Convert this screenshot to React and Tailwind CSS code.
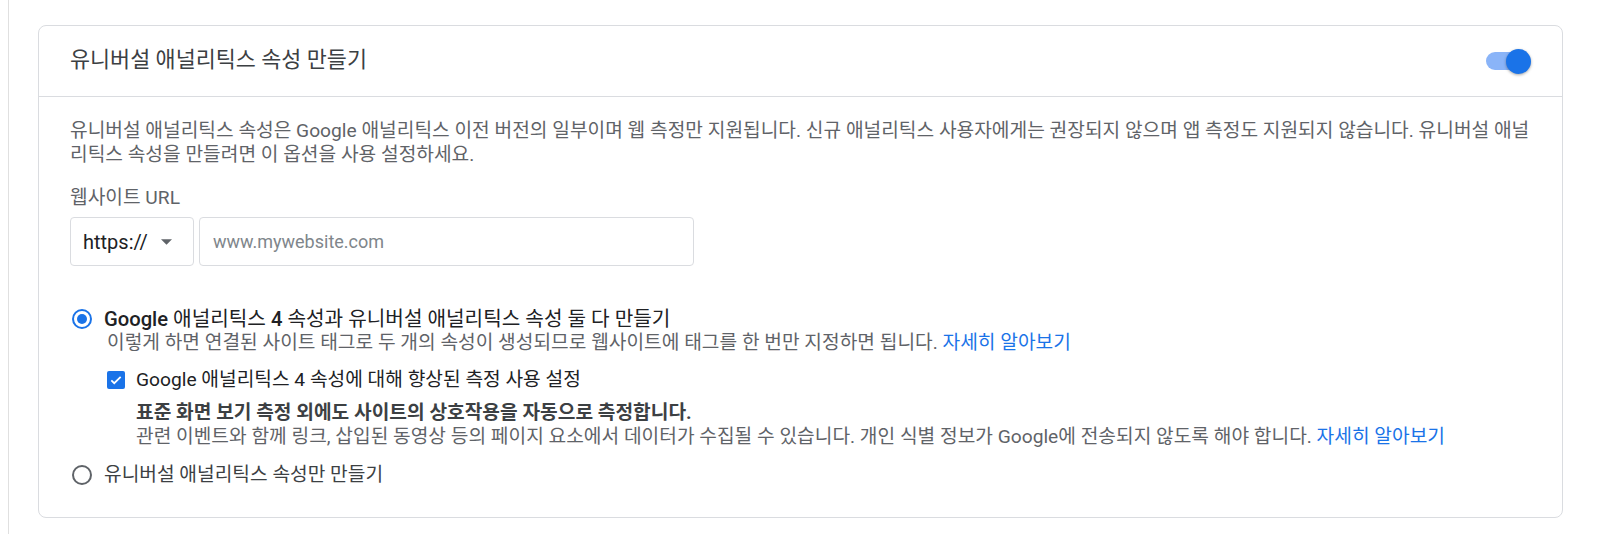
import { useState } from 'react';

const font = { fontFamily: 'Roboto, "Noto Sans CJK KR", sans-serif' };

function Toggle({ on, onChange }) {
  return (
    <button
      type="button"
      onClick={() => onChange(!on)}
      className="relative w-[45px] h-[25px] shrink-0"
    >
      <span className={`absolute left-0 top-[3.5px] w-[40px] h-[18px] rounded-full ${on ? 'bg-[#8ab4f8]' : 'bg-[#bdc1c6]'}`}></span>
      <span
        className={`absolute top-0 w-[25px] h-[25px] rounded-full shadow-[0_1px_3px_rgba(0,0,0,0.35)] ${on ? 'right-0 bg-[#1a73e8]' : 'left-0 bg-white'}`}
      ></span>
    </button>
  );
}

function Radio({ checked }) {
  return (
    <span
      className={`ml-[2px] w-[20px] h-[20px] rounded-full border-2 flex items-center justify-center shrink-0 ${checked ? 'border-[#1a73e8]' : 'border-[#5f6368]'}`}
    >
      {checked && <span className="w-[10px] h-[10px] rounded-full bg-[#1a73e8]"></span>}
    </span>
  );
}

export default function App() {
  const [enabled, setEnabled] = useState(true);
  const [both, setBoth] = useState(true);
  const [enhanced, setEnhanced] = useState(true);

  return (
    <div className="w-full min-h-[534px] bg-white pl-[8px]" style={font}>
      <div className="min-h-[534px] border-l border-[#e0e0e0] pt-[25px] pl-[29px]">
        <div className="w-[1525px] border border-[#dadce0] rounded-lg bg-white">
          <div className="h-[71px] px-[31px] flex items-center justify-between border-b border-[#dadce0]">
            <h2 className="text-[21.8px] leading-[28px] text-[#3c4043] -mt-[3px]">유니버설 애널리틱스 속성 만들기</h2>
            <Toggle on={enabled} onChange={setEnabled} />
          </div>

          <div className="px-[31px] pt-[22px] pb-[30px] text-[19.2px] leading-[24px]">
            <p className="text-[#5f6368]">
              <span className="block whitespace-nowrap">
                유니버설 애널리틱스 속성은 Google 애널리틱스 이전 버전의 일부이며 웹 측정만 지원됩니다. 신규 애널리틱스 사용자에게는 권장되지 않으며 앱 측정도 지원되지 않습니다. 유니버설 애널
              </span>
              <span className="block whitespace-nowrap">리틱스 속성을 만들려면 이 옵션을 사용 설정하세요.</span>
            </p>

            <div className="mt-[19px] text-[#5f6368]">웹사이트 URL</div>
            <div className="mt-[7px] flex gap-[5px]">
              <div className="w-[124px] h-[49px] border border-[#dadce0] rounded-[4px] flex items-center justify-between pl-[12px] pr-[21px] text-[#202124] text-[20px]">
                <span>https://</span>
                <svg width="11" height="6" viewBox="0 0 10 5" className="shrink-0">
                  <path d="M0 0h10L5 5z" fill="#5f6368" />
                </svg>
              </div>
              <input
                className="w-[495px] h-[49px] border border-[#dadce0] rounded-[4px] pl-[13px] outline-none text-[18px] placeholder:text-[#80868b] text-[#202124]"
                placeholder="www.mywebsite.com"
              />
            </div>

            <div className="mt-[41px]">
              <label className="flex items-center gap-[12px] cursor-pointer" onClick={() => setBoth(true)}>
                <Radio checked={both} />
                <span className="text-[#202124] text-[20.2px]">
                  <span className="font-medium">Google</span> 애널리틱스 <span className="font-medium">4</span> 속성과 유니버설 애널리틱스 속성 둘 다 만들기
                </span>
              </label>
              <div className="pl-[37px]">
                <p className="text-[#5f6368]">
                  이렇게 하면 연결된 사이트 태그로 두 개의 속성이 생성되므로 웹사이트에 태그를 한 번만 지정하면 됩니다.{' '}
                  <a className="text-[#1a73e8]">자세히 알아보기</a>
                </p>
                <label className="mt-[13px] flex items-center gap-[11px] cursor-pointer" onClick={() => setEnhanced(!enhanced)}>
                  <span className={`w-[18px] h-[18px] rounded-[2px] flex items-center justify-center shrink-0 ${enhanced ? 'bg-[#1a73e8]' : 'border-2 border-[#5f6368]'}`}>
                    {enhanced && (
                      <svg width="14" height="14" viewBox="0 0 24 24">
                        <path d="M4 12.5l5 5L20 6.5" fill="none" stroke="#fff" strokeWidth="3" />
                      </svg>
                    )}
                  </span>
                  <span className="text-[#202124]">Google 애널리틱스 4 속성에 대해 향상된 측정 사용 설정</span>
                </label>
                <div className="pl-[29px] mt-[9px]">
                  <p className="font-bold text-[#3c4043]">표준 화면 보기 측정 외에도 사이트의 상호작용을 자동으로 측정합니다.</p>
                  <p className="text-[#5f6368]">
                    관련 이벤트와 함께 링크, 삽입된 동영상 등의 페이지 요소에서 데이터가 수집될 수 있습니다. 개인 식별 정보가 Google에 전송되지 않도록 해야 합니다.{' '}
                    <a className="text-[#1a73e8]">자세히 알아보기</a>
                  </p>
                </div>
              </div>
              <label className="mt-[14px] flex items-center gap-[12px] cursor-pointer" onClick={() => setBoth(false)}>
                <Radio checked={!both} />
                <span className="text-[#3c4043]">유니버설 애널리틱스 속성만 만들기</span>
              </label>
            </div>
          </div>
        </div>
      </div>
    </div>
  );
}
